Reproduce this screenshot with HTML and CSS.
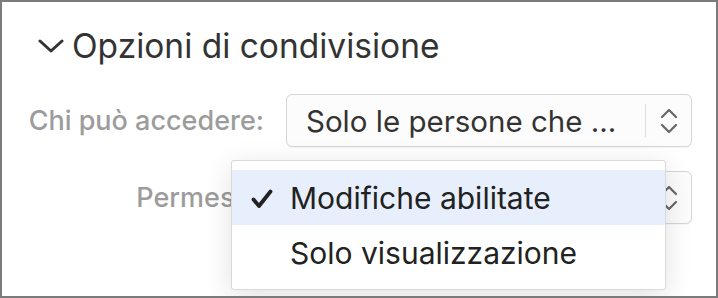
FILE: index.html
```html
<!DOCTYPE html>
<html lang="it">
<head>
    <meta charset="UTF-8">
    <meta name="viewport" content="width=device-width, initial-scale=1.0">
    <title>Opzioni di condivisione</title>
    <link rel="stylesheet" href="styles.css">
</head>
<body>
    <div class="panel">
        <div class="section-title">
            <svg class="disclosure" width="26" height="16" viewBox="0 0 26 16">
                <path d="M2 3 L13 13 L24 3" fill="none" stroke="#333" stroke-width="3" stroke-linecap="round" stroke-linejoin="round"/>
            </svg>
            <span>Opzioni di condivisione</span>
        </div>

        <div class="form-grid">
            <label class="field-label">Chi può accedere:</label>
            <div class="popup">
                <span class="popup-text">Solo le persone che ...</span>
                <span class="popup-sep"></span>
                <svg class="stepper" width="20" height="28" viewBox="0 0 20 28">
                    <path d="M3 10 L10 3 L17 10 M3 18 L10 25 L17 18" fill="none" stroke="#666" stroke-width="2.2" stroke-linecap="round" stroke-linejoin="round"/>
                </svg>
            </div>

            <label class="field-label">Permessi:</label>
            <!-- value is covered by the open menu -->
            <div class="popup">
                <span class="popup-text"></span>
                <span class="popup-sep"></span>
                <svg class="stepper" width="20" height="28" viewBox="0 0 20 28">
                    <path d="M3 10 L10 3 L17 10 M3 18 L10 25 L17 18" fill="none" stroke="#666" stroke-width="2.2" stroke-linecap="round" stroke-linejoin="round"/>
                </svg>
            </div>
        </div>

        <!-- open popup menu -->
        <div class="menu">
            <div class="menu-item selected">
                <svg class="check" width="22" height="20" viewBox="0 0 22 20">
                    <path d="M2.5 10.5 L8 17 L19.5 2.5" fill="none" stroke="#222" stroke-width="3.8" stroke-linecap="round" stroke-linejoin="round"/>
                </svg>
                <span>Modifiche abilitate</span>
            </div>
            <div class="menu-item">
                <span>Solo visualizzazione</span>
            </div>
        </div>
    </div>
</body>
</html>
```

FILE: styles.css
```css
/* Share options panel */
body {
    margin: 0;
    background: #fff;
    font-family: Inter, "Noto Sans", sans-serif;
}

.panel {
    position: relative;
    box-sizing: border-box;
    width: 718px;
    height: 298px;
    border: 2px solid #7b7b7b;
    background: #fff;
    overflow: hidden;
}

.section-title {
    display: flex;
    align-items: center;
    gap: 8px;
    padding: 22px 0 0 36px;
    height: 44px;
    color: #333;
    font-size: 33.5px;
    font-weight: 400;
}

.disclosure {
    flex: none;
}

.form-grid {
    display: grid;
    grid-template-columns: 262px 406px;
    column-gap: 22px;
    row-gap: 24px;
    margin-top: 26px;
    align-items: center;
}

.field-label {
    text-align: right;
    color: #9c9c9c;
    font-size: 27px;
    font-weight: 500;
    white-space: nowrap;
}

.popup {
    display: flex;
    align-items: center;
    height: 53px;
    box-sizing: border-box;
    border: 1px solid #d6d6d6;
    border-radius: 6px;
    background: #fcfcfc;
    box-shadow: 0 1px 1px rgba(0, 0, 0, 0.04);
}

.popup-text {
    flex: 1;
    padding-left: 19px;
    color: #333;
    font-size: 29.5px;
    white-space: nowrap;
    overflow: hidden;
}

.popup-sep {
    width: 1px;
    height: 33px;
    background: #dedede;
    margin-right: 13px;
}

.stepper {
    margin-right: 12px;
}

.menu {
    position: absolute;
    left: 229px;
    top: 158px;
    width: 435px;
    box-sizing: border-box;
    padding: 9px 0;
    background: #fff;
    border: 1px solid #d9d9d9;
    border-radius: 3px;
    box-shadow: 0 6px 28px rgba(0, 0, 0, 0.12);
}

.menu-item {
    display: flex;
    align-items: center;
    height: 55px;
    padding-left: 58px;
    color: #222;
    font-size: 30px;
}

.menu-item.selected {
    position: relative;
    background: #e8effc;
}

.check {
    position: absolute;
    left: 19px;
    top: 19px;
}
```
